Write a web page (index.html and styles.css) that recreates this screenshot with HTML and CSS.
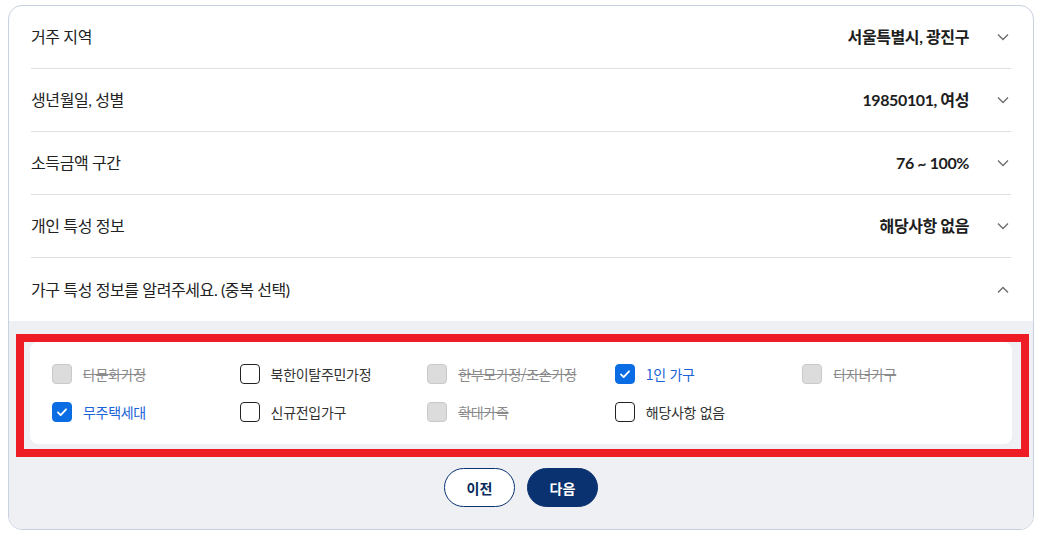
FILE: index.html
```html
<!DOCTYPE html>
<html lang="ko">
<head>
<meta charset="utf-8">
<link rel="stylesheet" href="styles.css">
</head>
<body>
<div class="card">
  <div class="row">
    <span class="label">거주 지역</span>
    <span class="value">서울특별시, 광진구</span>
    <svg class="chev" viewBox="0 0 12 8"><polyline points="1,1.5 6,6.5 11,1.5"/></svg>
  </div>
  <div class="row">
    <span class="label">생년월일, 성별</span>
    <span class="value">19850101, 여성</span>
    <svg class="chev" viewBox="0 0 12 8"><polyline points="1,1.5 6,6.5 11,1.5"/></svg>
  </div>
  <div class="row">
    <span class="label">소득금액 구간</span>
    <span class="value">76 ~ 100%</span>
    <svg class="chev" viewBox="0 0 12 8"><polyline points="1,1.5 6,6.5 11,1.5"/></svg>
  </div>
  <div class="row">
    <span class="label">개인 특성 정보</span>
    <span class="value">해당사항 없음</span>
    <svg class="chev" viewBox="0 0 12 8"><polyline points="1,1.5 6,6.5 11,1.5"/></svg>
  </div>
  <div class="row open">
    <span class="label">가구 특성 정보를 알려주세요. (중복 선택)</span>
    <svg class="chev" viewBox="0 0 12 8"><polyline points="1,6.5 6,1.5 11,6.5"/></svg>
  </div>
  <div class="panel">
    <div class="options">
      <div class="highlight"></div>
      <label class="opt disabled"><span class="box"></span><span class="txt">다문화가정</span></label>
      <label class="opt"><span class="box"></span><span class="txt">북한이탈주민가정</span></label>
      <label class="opt disabled"><span class="box"></span><span class="txt">한부모가정/조손가정</span></label>
      <label class="opt checked"><span class="box"><svg viewBox="0 0 20 20"><polyline points="5.5,10.5 8.5,13.5 14.5,7"/></svg></span><span class="txt">1인 가구</span></label>
      <label class="opt disabled"><span class="box"></span><span class="txt">다자녀가구</span></label>
      <label class="opt checked"><span class="box"><svg viewBox="0 0 20 20"><polyline points="5.5,10.5 8.5,13.5 14.5,7"/></svg></span><span class="txt">무주택세대</span></label>
      <label class="opt"><span class="box"></span><span class="txt">신규전입가구</span></label>
      <label class="opt disabled"><span class="box"></span><span class="txt">확대가족</span></label>
      <label class="opt"><span class="box"></span><span class="txt">해당사항 없음</span></label>
    </div>
    <div class="buttons">
      <button class="btn prev">이전</button>
      <button class="btn next">다음</button>
    </div>
  </div>
</div>
</body>
</html>
```

FILE: styles.css
```css
* { box-sizing: border-box; }
html, body { margin: 0; padding: 0; background: #fff; }
body {
  padding: 5px 8px 8px;
  font-family: Lato, "Noto Sans CJK KR", sans-serif;
  color: #222;
}
.card {
  border: 1px solid #c8d1e0;
  border-radius: 14px;
  overflow: hidden;
  background: #fff;
}
.row {
  height: 63px;
  margin: 0 22px;
  border-bottom: 1px solid #dcdfe4;
  display: flex;
  align-items: center;
  font-size: 16px;
  letter-spacing: -0.4px;
}
.row.open { border-bottom: none; }
.row .label { flex: 1; padding-bottom: 2px; }
.row .value { font-weight: 700; color: #1d1d1d; margin-right: 28px; padding-bottom: 2px; }
.chev {
  width: 12px;
  height: 8px;
  margin-right: 2px;
  fill: none;
  stroke: #6b6b6b;
  stroke-width: 1.3;
}
.panel {
  background: #eff0f4;
  padding: 21px 21px 22px 21px;
}
.options {
  position: relative;
  background: #fff;
  border-radius: 8px;
  padding: 22px 22px 22px;
  display: grid;
  grid-template-columns: repeat(5, 1fr);
  row-gap: 18px;
}
.highlight {
  position: absolute;
  top: -8px;
  left: -14px;
  right: -17px;
  bottom: -13px;
  border: 8px solid #ee1c25;
  pointer-events: none;
}
.opt {
  display: flex;
  align-items: center;
  font-size: 14px;
  letter-spacing: -0.3px;
  height: 20px;
  color: #333;
  font-family: "Noto Sans CJK KR", sans-serif;
}
.box {
  width: 20px;
  height: 20px;
  border: 1.5px solid #222;
  border-radius: 4px;
  background: #fff;
  margin-right: 11px;
  flex: none;
  display: flex;
}
.box svg {
  width: 100%;
  height: 100%;
  fill: none;
  stroke: #fff;
  stroke-width: 2;
  stroke-linecap: round;
  stroke-linejoin: round;
}
.opt.disabled .box { background: #dcdcdc; border: 1px solid #c9c9c9; }
.opt.disabled .txt { color: #8a8a8a; text-decoration: line-through; }
.opt.checked .box { background: #0b6de3; border-color: #0b6de3; }
.opt.checked .txt { color: #1a63d8; }
.buttons {
  display: flex;
  justify-content: center;
  gap: 12px;
  margin-top: 24px;
}
.btn {
  width: 71px;
  height: 39px;
  border-radius: 20px;
  font-family: "Noto Sans CJK KR", sans-serif;
  font-size: 14px;
  font-weight: 700;
  border: 1px solid #0a3270;
  cursor: pointer;
}
.btn.prev { background: #fff; color: #0a2a5c; }
.btn.next { background: #0a3270; color: #fff; }
```
